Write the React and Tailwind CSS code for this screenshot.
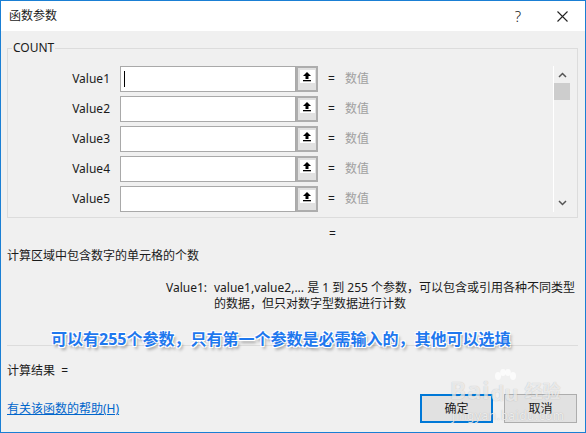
import React from 'react';

const font = { fontFamily: '"Noto Sans", "Noto Sans CJK SC", sans-serif' };

function UpArrow() {
  return (
    <svg width="10" height="11" viewBox="0 0 10 11">
      <path d="M5 1 L1 5 H3.5 V8 H6.5 V5 H9 Z" fill="#000" />
      <rect x="1" y="9" width="8" height="1.3" fill="#000" />
    </svg>
  );
}

function Row({ label, focused }) {
  return (
    <div className="flex items-center h-[26px]">
      <div className="w-[102px] text-right text-[12px] text-[#1a1a1a]">{label}</div>
      <div className="ml-[10px] flex h-[26px]">
        <div className="w-[176px] h-full bg-white border border-[#a9a9a9] flex items-center pl-[3px]">
          {focused && <div className="w-px h-[16px] bg-black" />}
        </div>
        <div className="w-[22px] h-full border-2 border-[#adadad] bg-[#e1e1e1] flex justify-center pt-[2px]">
          <div className="w-[15px] h-[13px] bg-white flex items-center justify-center">
            <UpArrow />
          </div>
        </div>
      </div>
      <div className="ml-[10px] text-[12px] text-[#1a1a1a]">=</div>
      <div className="ml-[10px] text-[12px] text-[#a0a0a0]">数值</div>
    </div>
  );
}

export default function App() {
  return (
    <div style={font} className="relative w-[586px] h-[433px] border border-[#1a7fd4] bg-[#f0f0f0] flex flex-col text-[#1a1a1a] overflow-hidden">
      {/* title bar */}
      <div className="h-[30px] bg-white flex items-center pl-[8px] shrink-0">
        <span className="text-[12px]">函数参数</span>
        <span className="ml-auto mr-[36px] text-[15px] font-light">?</span>
        <svg className="mr-[17px]" width="11" height="11" viewBox="0 0 11 11">
          <path d="M0.5 0.5 L10.5 10.5 M10.5 0.5 L0.5 10.5" stroke="#222" strokeWidth="1.1" />
        </svg>
      </div>

      <div className="pl-[6px] pr-[7px] flex flex-col">
        <fieldset className="mt-[9px] border border-[#dcdcdc] h-[178px] flex">
          <legend className="ml-[4px] px-[1px] text-[12px] leading-[16px]">COUNT</legend>
          <div className="flex w-full pt-[10px] pb-[5px]">
            <div className="flex flex-col gap-[4px]">
              <Row label="Value1" focused />
              <Row label="Value2" />
              <Row label="Value3" />
              <Row label="Value4" />
              <Row label="Value5" />
            </div>
            <div className="ml-auto mr-[7px] w-[17px] h-[146px] border-l border-white flex flex-col items-center">
              <svg className="mt-[6px]" width="9" height="6" viewBox="0 0 9 6">
                <path d="M1 5 L4.5 1.5 L8 5" stroke="#555" strokeWidth="1.5" fill="none" />
              </svg>
              <div className="mt-[5px] w-[16px] h-[17px] bg-[#cdcdcd]" />
              <svg className="mt-auto mb-[6px]" width="9" height="6" viewBox="0 0 9 6">
                <path d="M1 1 L4.5 4.5 L8 1" stroke="#555" strokeWidth="1.5" fill="none" />
              </svg>
            </div>
          </div>
        </fieldset>

        <div className="mt-[8px] h-[16px] leading-[16px] text-[12px] pl-[322px]">=</div>
        <div className="mt-[6px] leading-[16px] text-[12px]">计算区域中包含数字的单元格的个数</div>

        <div className="mt-[16px] flex text-[12px] leading-[16px]">
          <div className="w-[200px] text-right shrink-0">Value1:</div>
          <div className="ml-[7px] w-[364px]">
            value1,value2,... 是 1 到 255 个参数，可以包含或引用各种不同类型的数据，但只对数字型数据进行计数
          </div>
        </div>

        <div className="mt-[33px] h-px bg-[#dcdcdc]" />

        <div className="mt-[17px] leading-[16px] text-[12px]">计算结果&nbsp;&nbsp;=</div>

        <div className="mt-[15px] flex items-center">
          <a href="#" className="text-[12px] text-[#0066cc] underline mt-[1px]">有关该函数的帮助(H)</a>
          <div className="ml-auto flex gap-[11px] pr-[1px]">
            <button className="w-[73px] h-[29px] border-2 border-[#0078d7] bg-[#e1e1e1] text-[12px]">确定</button>
            <button className="w-[73px] h-[29px] border border-[#adadad] bg-[#e1e1e1] text-[12px]">取消</button>
          </div>
        </div>
      </div>

      {/* annotation overlay */}
      <div
        className="absolute left-[50px] top-[327px] text-[16px] font-bold text-[#1f78ee] whitespace-nowrap leading-[22px]"
        style={{ textShadow: '1px 1px 0 #fff, -1px -1px 0 #fff, 1px -1px 0 #fff, -1px 1px 0 #fff, 2px 3px 3px rgba(0,0,0,0.35)' }}
      >
        可以有255个参数，只有第一个参数是必需输入的，其他可以选填
      </div>

      {/* watermark */}
      <div className="absolute left-[449px] top-[368px] flex flex-col items-start pointer-events-none" style={{ textShadow: '0 0 1px rgba(0,0,0,0.25)' }}>
        <div className="flex items-end text-white/70">
          <span className="text-[24px] font-bold leading-[26px] tracking-[1px]">Bai</span>
          <div className="flex flex-col items-center w-[28px]">
            <svg width="24" height="14" viewBox="0 0 24 14" className="-mb-[2px]">
              <ellipse cx="5" cy="7" rx="3" ry="4" fill="rgba(255,255,255,0.75)" />
              <ellipse cx="10" cy="3.5" rx="2.8" ry="3.4" fill="rgba(255,255,255,0.75)" />
              <ellipse cx="15" cy="3.5" rx="2.8" ry="3.4" fill="rgba(255,255,255,0.75)" />
              <ellipse cx="20" cy="7" rx="3" ry="4" fill="rgba(255,255,255,0.75)" />
            </svg>
            <span className="text-[22px] font-bold leading-[22px]">du</span>
          </div>
          <span className="ml-[6px] text-[18px] font-bold leading-[24px]">经验</span>
        </div>
        <span className="mt-[4px] ml-[2px] text-[12px] text-white/75 tracking-[0.5px]">jingyan.baidu.com</span>
      </div>
    </div>
  );
}
